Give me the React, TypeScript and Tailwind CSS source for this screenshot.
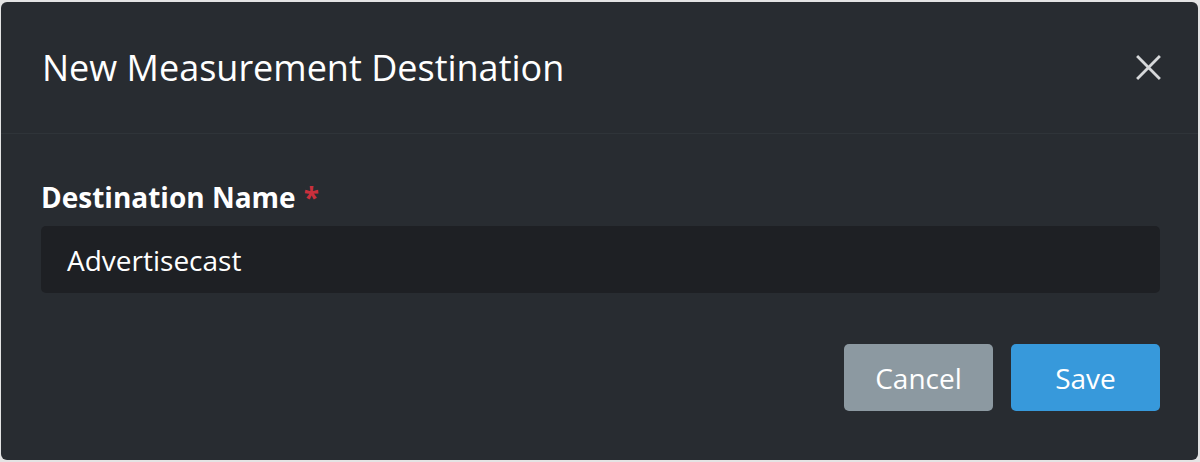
import React from 'react';

export default function App() {
  return (
    <div className="w-[1200px] h-[462px] bg-[#e4e4e4] pl-px pt-[2px] pr-[2px] pb-[2px] font-['Open_Sans',sans-serif]">
      <div className="h-full w-full rounded-[6px] bg-[#282c31] flex flex-col">
        <div className="h-[132px] flex items-center justify-between pl-[41px] pr-[37px] border-b border-[#2f3439]">
          <h1 className="text-[36px] text-white leading-none">New Measurement Destination</h1>
          <button className="w-[25px] h-[25px] text-[#d6d8da]" aria-label="Close">
            <svg viewBox="0 0 24 24" className="w-full h-full" fill="none" stroke="currentColor" strokeWidth="2.7" strokeLinecap="square">
              <path d="M2 2 L22 22 M22 2 L2 22" />
            </svg>
          </button>
        </div>
        <div className="pl-[40px] pr-[38px] pt-[49px] flex flex-col">
          <label className="text-[28px] font-bold text-white leading-none flex gap-[8px]">
            Destination Name <span className="text-[#c9303c]">*</span>
          </label>
          <div className="mt-[15px] h-[67px] rounded-[5px] bg-[#1e2024] flex items-center px-[26px]">
            <span className="text-[28px] text-white">Advertisecast</span>
          </div>
          <div className="mt-[51px] flex justify-end gap-[18px]">
            <button className="w-[149px] h-[67px] rounded-[5px] bg-[#8c99a1] text-white text-[28px]">Cancel</button>
            <button className="w-[149px] h-[67px] rounded-[5px] bg-[#3799db] text-white text-[28px]">Save</button>
          </div>
        </div>
      </div>
    </div>
  );
}
